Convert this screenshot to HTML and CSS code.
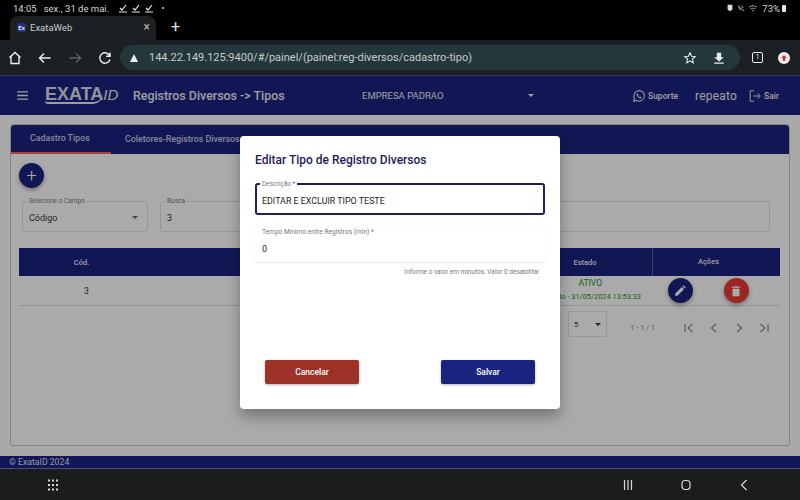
FILE: index.html
```html
<!DOCTYPE html>
<html lang="pt-BR">
<head>
    <meta charset="UTF-8">
    <title>ExataWeb</title>
    <link rel="stylesheet" href="styles.css">
</head>
<body>
    <div class="status-bar">
        <div class="status-left">
            <span class="status-time">14:05</span>
            <span>sex., 31 de mai.</span>
            <span class="checks">
                <svg viewBox="0 0 10 10"><path d="M2 5l2 2 4-5M1 9h8" /></svg>
                <svg viewBox="0 0 10 10"><path d="M2 5l2 2 4-5M1 9h8" /></svg>
                <svg viewBox="0 0 10 10"><path d="M2 5l2 2 4-5M1 9h8" /></svg>
            </span>
            <span class="status-dot"></span>
        </div>
        <div class="status-right">
            <svg class="st-icon" viewBox="0 0 10 10"><path class="fill" d="M2 1h6v6l-3 2-3-2z" /></svg>
            <svg class="st-icon" viewBox="0 0 10 10"><path d="M1 2l8 7M2 4l3 4M5 2l3 3" /></svg>
            <svg class="st-icon wifi" viewBox="0 0 10 10"><path d="M1 4q4-3 8 0M2.500 6q2.500-2 5 0M4 8q1-1 2 0" /></svg>
            <span class="battery-level">73%</span>
            <span class="battery"></span>
        </div>
    </div>

    <div class="tab-strip">
        <div class="browser-tab">
            <span class="favicon">Ex</span>
            <span class="tab-title">ExataWeb</span>
            <span class="tab-close">×</span>
        </div>
        <span class="new-tab">+</span>
    </div>

    <div class="toolbar">
        <svg class="tb-icon" viewBox="0 0 16 16"><path d="M2.500 7.500L8 2.500l5.500 5M4 6.500V13.500h8V6.500" /></svg>
        <svg class="tb-icon" viewBox="0 0 16 16"><path d="M13.500 8h-11M7 3.500L2.500 8 7 12.500" /></svg>
        <svg class="tb-icon off" viewBox="0 0 16 16"><path d="M2.500 8h11M9 3.500L13.500 8 9 12.500" /></svg>
        <svg class="tb-icon" viewBox="0 0 16 16"><path d="M12.800 6A5.200 5.200 0 1 0 13 9.500M13 2.500V6.300H9.200" /></svg>
        <div class="omnibox">
            <span class="warn"></span>
            <span class="url">144.22.149.125:9400/#/painel/(painel:reg-diversos/cadastro-tipo)</span>
            <svg class="omni-icon star" viewBox="0 0 16 16"><path d="M8 2l1.800 4 4.200.4-3.200 2.800 1 4.300L8 11.200 4.200 13.500l1-4.300L2 6.400 6.200 6z" /></svg>
            <svg class="omni-icon dl" viewBox="0 0 16 16"><path class="fill" d="M5.500 2h5v5h3L8 12 2.500 7h3zM2.500 13h11v1.500h-11z" /></svg>
        </div>
        <span class="tab-count">1</span>
        <span class="profile"><svg viewBox="0 0 10 10"><path d="M5 1.500L8.500 5H6.500V8.500H3.500V5H1.500z" /></svg></span>
    </div>

    <div class="app">
        <header class="app-header">
            <svg class="menu-icon" viewBox="0 0 12 10"><path d="M0 1h12M0 5h12M0 9h12" /></svg>
            <div class="logo"><span class="logo-exata">EXATA</span><span class="logo-id">ID</span></div>
            <span class="page-title">Registros Diversos -&gt; Tipos</span>
            <div class="company">
                <span>EMPRESA PADRAO</span>
                <span class="caret"></span>
            </div>
            <div class="support">
                <svg viewBox="0 0 16 16"><path d="M2 14l.9-3.200A6 6 0 1 1 5.200 13.100z" /><path class="fill" d="M5.800 4.800c-1 1 -.6 2.800 1 4.400s3.400 2 4.400 1l-1.600-1.500-.9.500c-.8-.3-1.500-1-1.900-1.900l.5-.9z" /></svg>
                <span>Suporte</span>
            </div>
            <span class="username">repeato</span>
            <div class="logout">
                <svg viewBox="0 0 16 16"><path d="M7 2H2.500V14H7M6 8h8M11 5l3 3-3 3" /></svg>
                <span>Sair</span>
            </div>
        </header>

        <main class="page">
            <section class="card">
                <nav class="card-tabs">
                    <a class="card-tab active">Cadastro Tipos</a>
                    <a class="card-tab">Coletores-Registros Diversos</a>
                </nav>
                <div class="card-body">
                    <button class="fab add">+</button>
                    <div class="filters">
                        <fieldset class="filter filter-select">
                            <legend>Selecione o Campo</legend>
                            <span>Código</span>
                            <span class="caret"></span>
                        </fieldset>
                        <fieldset class="filter filter-search">
                            <legend>Busca</legend>
                            <span>3</span>
                        </fieldset>
                    </div>
                    <div class="grid grid-head">
                        <div>Cód.</div>
                        <div>Tipo</div>
                        <div class="col-state">Estado</div>
                        <div class="col-actions">Ações</div>
                    </div>
                    <div class="grid grid-row">
                        <div class="col-code">3</div>
                        <div>EDITAR E EXCLUIR TIPO TESTE</div>
                        <div class="state">
                            <span class="state-name">ATIVO</span>
                            <span class="state-date">Criado - 31/05/2024 13:53:33</span>
                        </div>
                        <div class="row-actions">
                            <button class="fab small edit">
                                <svg viewBox="0 0 16 16"><path d="M2.500 13.500V11L10 3.500 12.500 6 5 13.500zM11 2.500l1-1 2.500 2.500-1 1z" /></svg>
                            </button>
                            <button class="fab small delete">
                                <svg viewBox="0 0 16 16"><path d="M4 5.500h8V14H4zM3 3h3l.8-.8h2.400L10 3h3v1.300H3z" /></svg>
                            </button>
                        </div>
                    </div>
                    <div class="pager">
                        <div class="page-size"><span>5</span><span class="caret"></span></div>
                        <span class="page-range">1 - 1 / 1</span>
                        <div class="page-buttons">
                            <svg viewBox="0 0 12 12"><path d="M2 2v8M9.500 2L5 6l4.500 4" /></svg>
                            <svg viewBox="0 0 12 12"><path d="M8 2L3.500 6 8 10" /></svg>
                            <svg viewBox="0 0 12 12"><path d="M4 2l4.500 4L4 10" /></svg>
                            <svg viewBox="0 0 12 12"><path d="M10 2v8M2.500 2L7 6l-4.500 4" /></svg>
                        </div>
                    </div>
                </div>
            </section>
        </main>

        <footer class="app-footer">© ExataID 2024</footer>

        <div class="backdrop">
            <div class="dialog">
                <h2 class="dialog-title">Editar Tipo de Registro Diversos</h2>
                <fieldset class="field">
                    <legend>Descrição *</legend>
                    <span>EDITAR E EXCLUIR TIPO TESTE</span>
                </fieldset>
                <div class="field-min">
                    <label>Tempo Mínimo entre Registros (min) *</label>
                    <span>0</span>
                </div>
                <p class="hint">Informe o valor em minutos. Valor 0 desabilita!</p>
                <div class="dialog-actions">
                    <button class="btn btn-cancel">Cancelar</button>
                    <button class="btn btn-save">Salvar</button>
                </div>
            </div>
        </div>
    </div>

    <div class="nav-bar">
        <svg class="nav-apps" viewBox="0 0 12 12"><path d="M1 1.500h2M5 1.500h2M9 1.500h2M1 6h2M5 6h2M9 6h2M1 10.500h2M5 10.500h2M9 10.500h2" /></svg>
        <div class="nav-keys">
            <svg viewBox="0 0 12 12"><path d="M2.500 1v10M6 1v10M9.500 1v10" /></svg>
            <svg viewBox="0 0 12 12"><rect x="2" y="1.500" width="8" height="9" rx="3" /></svg>
            <svg viewBox="0 0 12 12"><path d="M8.500 1L3.500 6l5 5" /></svg>
        </div>
    </div>
</body>
</html>
```

FILE: styles.css
```css
* { box-sizing: border-box; }
html, body { margin: 0; height: 500px; overflow: hidden; }
body { width: 800px; display: flex; flex-direction: column; font-family: Roboto, "Liberation Sans", sans-serif; background: #000; }
svg { display: block; fill: none; stroke: currentColor; }
svg .fill { fill: currentColor; stroke: none; }
fieldset { margin: 0; min-width: 0; }
button { font-family: inherit; border: none; padding: 0; }

/* android status bar */
.status-bar { height: 16px; display: flex; justify-content: space-between; align-items: center; padding: 0 14px 0 13px; color: #d8d8d8; font-size: 9.500px; }
.status-left, .status-right { display: flex; align-items: center; }
.status-left { gap: 7px; }
.checks { display: flex; gap: 3px; margin-left: 2px; }
.checks svg { width: 10px; height: 10px; stroke: #e8e8e8; stroke-width: 1.200; }
.status-dot { width: 2px; height: 2px; border-radius: 50%; background: #ccc; margin-left: 1px; }
.status-right { gap: 3px; }
.st-icon { width: 8px; height: 8px; color: #ddd; }
.wifi { width: 10px; height: 10px; color: #999; margin-right: 1px; }
.battery-level { font-size: 9.500px; }
.battery { width: 4px; height: 7px; background: #e8e8e8; border-radius: 1px; margin-left: -1px; }

/* browser chrome */
.tab-strip { height: 24px; display: flex; align-items: flex-end; padding-left: 10px; }
.browser-tab { width: 146px; height: 24px; background: #1c2023; border-radius: 8px 8px 0 0; display: flex; align-items: center; padding: 0 6px 2px 7px; color: #c8cacc; font-size: 9.500px; }
.favicon { width: 9px; height: 9px; background: #27307c; color: #e4e4ee; font-size: 6px; font-weight: 700; line-height: 9px; text-align: center; border-radius: 2px; margin-right: 4px; }
.tab-title { flex: 1; }
.tab-close { font-size: 12px; color: #b8b8b8; }
.new-tab { color: #e0e0e0; font-size: 16px; line-height: 22px; margin-left: 15px; align-self: flex-start; }

.toolbar { height: 35px; background: #1c2023; display: flex; align-items: center; padding: 0 10px 0 7px; }
.tb-icon { width: 16px; height: 16px; color: #eceff1; stroke-width: 1.400; margin-right: 14px; flex: none; }
.tb-icon.off { color: #5b5f62; }
.tb-icon:nth-child(4) { margin-right: 7px; }
.omnibox { width: 620px; height: 25px; background: #24373a; border-radius: 13px; display: flex; align-items: center; padding: 0 14px 0 10px; flex: none; }
.warn { width: 0; height: 0; border-left: 4.500px solid transparent; border-right: 4.500px solid transparent; border-bottom: 8px solid #e8eaed; margin-right: 11px; }
.url { flex: 1; color: #c4cbcc; font-size: 11px; white-space: nowrap; }
.omni-icon { width: 14px; height: 14px; color: #e8eaed; }
.star { margin-right: 15px; stroke-width: 1.200; }
.tab-count { width: 11px; height: 11px; border: 1.200px solid #e8eaed; border-radius: 2px; color: #e8eaed; font-size: 6.500px; line-height: 9px; text-align: center; margin-left: 12px; flex: none; }
.profile { width: 12px; height: 12px; border-radius: 50%; background: #f4ecec; margin-left: 15px; padding: 2px; flex: none; }
.profile svg { fill: #c9252c; stroke: none; }

/* app */
.app { position: relative; height: 394px; display: flex; flex-direction: column; background: #fafafa; }
.app-header { height: 40px; background: #1a237e; border-top: 1px solid #4c5491; color: #e8e8ee; display: flex; align-items: center; padding-left: 17px; flex: none; }
.menu-icon { width: 11px; height: 9px; stroke-width: 1.500; margin-right: 17px; }
.logo { display: flex; align-items: baseline; width: 79px; margin-right: 9px; }
.logo-exata { font-family: "Liberation Sans", sans-serif; font-weight: 700; font-size: 18px; border-bottom: 2px solid #e8e8ee; line-height: 15px; border-radius: 0 0 10px 3px; color: #d8d9e4; }
.logo-id { font-family: "Liberation Sans", sans-serif; font-style: italic; font-size: 15px; line-height: 15px; }
.page-title { font-size: 12.400px; font-weight: 500; width: 229px; }
.company { width: 172px; display: flex; justify-content: space-between; align-items: center; font-size: 9.500px; margin-right: 98px; padding-right: 0; }
.caret { width: 0; height: 0; border-left: 3px solid transparent; border-right: 3px solid transparent; border-top: 3px solid currentColor; }
.support { display: flex; align-items: center; gap: 2px; font-size: 8.500px; font-weight: 500; width: 63px; }
.support svg { width: 14px; height: 14px; stroke-width: 1.200; }
.username { font-size: 12px; letter-spacing: .2px; width: 53px; flex: none; }
.logout { display: flex; align-items: center; gap: 2px; font-size: 8.500px; font-weight: 500; }
.logout svg { width: 14px; height: 14px; stroke-width: 1.100; }

.page { flex: 1; padding: 9px 10px 0; background: #fafafa; min-height: 0; }
.card { height: 322px; border: 1px solid #c4c4c4; border-radius: 4px 4px 2px 2px; background: #fbfbfb; overflow: hidden; }
.card-tabs { height: 30px; background: #1a237e; display: flex; margin: -1px -1px 0; }
.card-tab { height: 30px; display: flex; align-items: center; color: #c6c9dc; font-size: 8.800px; font-weight: 500; padding: 0 20px; white-space: nowrap; }
.card-tab.active { width: 101px; border-bottom: 2px solid #f0645a; }
.card-tab + .card-tab { padding-left: 14px; }
.card-body { padding: 9px 9px 0 8px; }

.fab { display: flex; align-items: center; justify-content: center; border-radius: 50%; color: #fff; box-shadow: 0 2px 4px rgba(0,0,0,.35); }
.add { width: 25px; height: 25px; background: #1a237e; font-size: 18px; font-weight: 300; line-height: 25px; }
.filters { display: flex; gap: 12px; margin: 10px 0 0 3px; padding-right: 10px; }
.filter { height: 34px; border: 1px solid #ddd; border-radius: 3px; padding: 0 6px; font-size: 9px; color: #333; display: flex; align-items: center; justify-content: space-between; }
.filter legend { font-size: 6.500px; color: #777; padding: 0 2px; margin-left: -2px; line-height: 6px; }
.filter-select { width: 126px; }
.filter-select .caret { color: #666; margin-right: 3px; }
.filter-search { flex: 1; }

.grid { display: grid; grid-template-columns: 125px 420px 88px 1fr; text-align: center; align-items: center; }
.grid-head { height: 28px; margin-top: 16px; background: #1a237e; color: #e3e5ef; font-size: 7.500px; font-weight: 500; }
.col-state { padding-right: 46px; }
.col-actions { height: 28px; line-height: 28px; border-left: 1px solid #5a6199; padding-right: 16px; }
.grid-row { height: 30px; border-bottom: 1px solid #ddd; font-size: 8.500px; color: #333; }
.grid-row > div:nth-child(2) { white-space: nowrap; }
.col-code { padding-left: 10px; }
.state { display: flex; flex-direction: column; align-items: flex-end; white-space: nowrap; padding-right: 11px; }
.state-name { color: #2e8b2e; font-size: 8.500px; line-height: 13px; margin-right: 39px; margin-top: -2px; }
.state-date { color: #2e8b2e; font-size: 7.400px; line-height: 13px; }
.row-actions { display: flex; justify-content: center; gap: 31px; padding-right: 16px; }
.small { width: 25px; height: 25px; }
.small svg { width: 14px; height: 14px; stroke: none; fill: #fff; }
.edit { background: #1a237e; }
.delete { background: #e53935; }

.pager { height: 43px; display: flex; align-items: center; justify-content: flex-end; color: #666; font-size: 7.500px; padding-right: 10px; }
.page-size { width: 39px; height: 26px; margin-top: -7px; border: 1px solid #e2e2e2; border-radius: 2px; display: flex; align-items: center; justify-content: space-between; padding: 0 5px; color: #333; margin-right: 23px; }
.page-range { width: 53px; color: #888; }
.page-buttons { display: flex; gap: 13px; color: #888; }
.page-buttons svg { width: 12px; height: 12px; stroke-width: 1.200; }

.app-footer { height: 13px; background: #1a237e; border-bottom: 1px solid #6f75ab; color: #dcdff0; font-size: 8.700px; line-height: 12px; padding-left: 9px; flex: none; margin-top: -1px; }

/* dialog over the app */
.backdrop { position: absolute; inset: 0; background: rgba(0,0,0,.32); display: flex; align-items: center; justify-content: center; }
.dialog { width: 320px; height: 273px; background: #fff; border-radius: 4px; box-shadow: 0 8px 14px rgba(0,0,0,.3); padding: 17px 15px 0; display: flex; flex-direction: column; }
.dialog-title { margin: 0; color: #1e2157; font-size: 12px; font-weight: 500; line-height: 15px; }
.field { height: 34px; margin: 13px 0 0; border: 2px solid #1e2157; border-radius: 3px; padding: 0 5px; font-size: 8.900px; color: #222; display: block; }
.field legend { font-size: 6.500px; color: #777; padding: 0 2px; margin-left: -2px; line-height: 6px; }
.field span { display: block; margin-top: 9px; line-height: 10px; }
.field-min { height: 36px; margin-top: 12px; border-bottom: 1px solid #e8e8e8; padding: 1px 7px 0; display: flex; flex-direction: column; gap: 8px; font-size: 9px; color: #222; box-shadow: 0 0 2px rgba(0,0,0,.06); }
.field-min label { font-size: 6.600px; color: #777; line-height: 8px; }
.field-min span { line-height: 10px; }
.hint { margin: 5px 6px 0 0; text-align: right; font-size: 6.500px; color: #777; line-height: 9px; }
.dialog-actions { margin-top: auto; padding: 0 10px 25px; display: flex; justify-content: space-between; }
.btn { width: 94px; height: 24px; border-radius: 2px; color: #fff; font-size: 8.500px; font-weight: 500; box-shadow: 0 1px 3px rgba(0,0,0,.3); }
.btn-cancel { background: #9c3128; }
.btn-save { background: #1a237e; }

/* android nav bar */
.nav-bar { flex: 1; background: #1a1c1e; display: flex; align-items: center; justify-content: space-between; padding: 0 50px 0 47px; color: #d8d8d8; }
.nav-apps { width: 12px; height: 12px; stroke-width: 2; }
.nav-keys { display: flex; gap: 46px; }
.nav-keys svg { width: 12px; height: 12px; stroke-width: 1.200; }
```
